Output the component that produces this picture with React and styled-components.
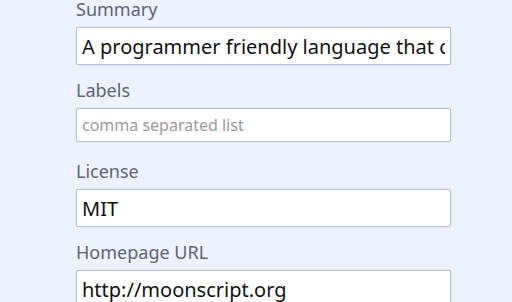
import React from "react";
import styled, { createGlobalStyle } from "styled-components";

const GlobalStyle = createGlobalStyle`
  html, body {
    margin: 0;
    padding: 0;
    background: #eef2fc;
  }
  body {
    font-family: "Noto Sans", "Open Sans", sans-serif;
  }
`;

// Page wrapper
const Form = styled.div`
  display: flex;
  flex-direction: column;
  padding: 0 0 0 76px;
  width: 375px;
`;

const Field = styled.div`
  display: flex;
  flex-direction: column;
  margin-bottom: ${({ gap }) => gap || 16}px;
`;

const Label = styled.label`
  display: block;
  height: 27px;
  line-height: 19px;
  font-size: 18px;
  color: #5c6475;
`;

const Input = styled.input`
  box-sizing: border-box;
  width: 100%;
  height: ${({ small }) => (small ? 34 : 38)}px;
  padding: 0 5px;
  border: 1px solid #b3bfdb;
  border-radius: 2px;
  box-shadow: 0 0 1px rgba(120, 140, 190, 0.6);
  background: #fff;
  font-family: "Noto Sans", "Open Sans", sans-serif;
  font-size: ${({ small }) => (small ? 16 : 20)}px;
  color: #111;
  outline: none;

  &::placeholder {
    color: #9a9a9a;
  }
`;

const App = () => {
  return (
    <>
      <GlobalStyle />
      <Form>
        <Field>
          <Label>Summary</Label>
          <Input defaultValue="A programmer friendly language that compiles to Lua" />
        </Field>
        <Field gap={20}>
          <Label>Labels</Label>
          <Input small placeholder="comma separated list" />
        </Field>
        <Field>
          <Label>License</Label>
          <Input defaultValue="MIT" />
        </Field>
        <Field>
          <Label>Homepage URL</Label>
          <Input defaultValue="http://moonscript.org" />
        </Field>
      </Form>
    </>
  );
};

export default App;
